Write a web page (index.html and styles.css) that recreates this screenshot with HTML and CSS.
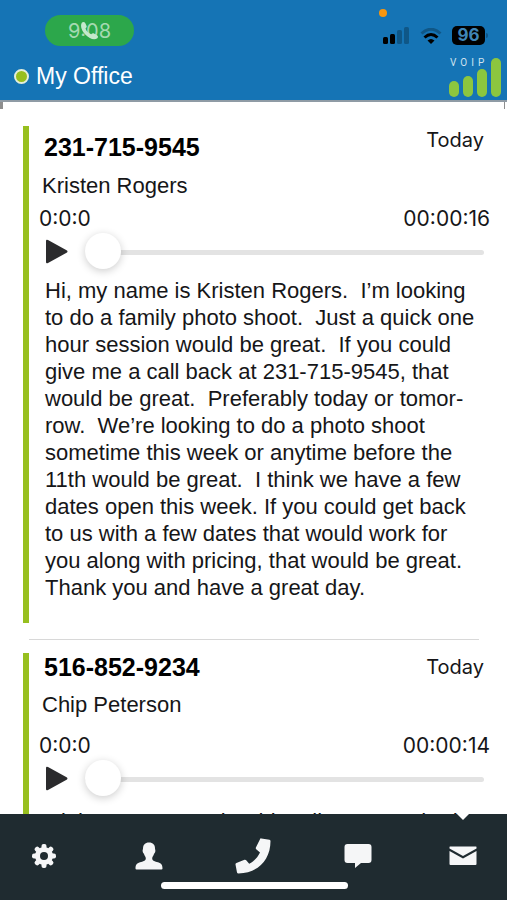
FILE: index.html
```html
<!DOCTYPE html>
<html lang="en">
  <head>
    <meta charset="UTF-8" />
    <meta name="viewport" content="width=device-width, initial-scale=1.0" />
    <title>My Office</title>
    <link rel="stylesheet" href="styles.css">
  </head>
  <body>
    <header class="header">
      <div class="status-bar">
        <div class="call-pill">
          <span>9:08</span>
          <svg class="pill-phone" width="20" height="20" viewBox="0 0 20 20">
            <path d="M3 1.5C4 .6 5.600 .8 6.200 2L7.600 5C8 6 7.400 6.800 6.500 7.600C7.300 10.200 9.600 12.500 12.200 13.300C13 12.400 14 12 15 12.500L18 14.200C19.200 14.900 19.300 16.200 18.300 17.200C12.500 22.300-1.800 8.500 3 1.500Z" />
          </svg>
        </div>
        <div class="status-icons">
          <span class="mic-dot"></span>
          <svg width="27" height="17" viewBox="0 0 27 17">
            <rect x="0" y="10" width="5" height="7" rx="1.500" />
            <rect x="7" y="7" width="5" height="10" rx="1.500" />
            <rect class="faded" x="14" y="3" width="5" height="14" rx="1.500" />
            <rect class="faded" x="21" y="0" width="5" height="17" rx="1.500" />
          </svg>
          <svg width="22" height="16" viewBox="0 0 22 16">
            <path class="wifi-arc faded" d="M1.500 5.500Q11-3 20.500 5.500" />
            <path class="wifi-arc" d="M4.500 9.500Q11 3.500 17.500 9.500" />
            <path d="M7.500 12.500Q11 9.500 14.500 12.500L11 16Z" />
          </svg>
          <span class="battery">96</span>
        </div>
      </div>
      <div class="title-bar">
        <span class="presence"></span>
        <h1 class="title">My Office</h1>
        <div class="voip">
          <span class="voip-label">VOIP</span>
          <svg width="52" height="40" viewBox="0 0 52 40">
            <rect x="0" y="23" width="10" height="16" rx="5" />
            <rect x="14" y="18" width="10" height="21" rx="5" />
            <rect x="28" y="11" width="10" height="28" rx="5" />
            <rect x="42" y="0" width="10" height="39" rx="5" />
          </svg>
        </div>
      </div>
    </header>

    <main class="messages">
      <article class="message">
        <div class="message-top">
          <h2 class="number">231-715-9545</h2>
          <span class="date">Today</span>
        </div>
        <div class="name">Kristen Rogers</div>
        <div class="times">
          <span>0:0:0</span>
          <span>00:00:16</span>
        </div>
        <div class="player">
          <button class="play" aria-label="Play">
            <svg width="22" height="26" viewBox="0 0 22 26">
              <path d="M0 2Q0 0 2 1L21 11.500Q22 12.500 21 13.500L2 24Q0 25 0 23Z" />
            </svg>
          </button>
          <input class="seek" type="range" min="0" max="16" value="0" aria-label="Position" />
        </div>
        <p class="transcript">
          Hi, my name is Kristen Rogers.&nbsp; I’m looking<br />
          to do a family photo shoot.&nbsp; Just a quick one<br />
          hour session would be great.&nbsp; If you could<br />
          give me a call back at 231-715-9545, that<br />
          would be great.&nbsp; Preferably today or tomor-<br />
          row.&nbsp; We’re looking to do a photo shoot<br />
          sometime this week or anytime before the<br />
          11th would be great.&nbsp; I think we have a few<br />
          dates open this week. If you could get back<br />
          to us with a few dates that would work for<br />
          you along with pricing, that would be great.<br />
          Thank you and have a great day.
        </p>
      </article>

      <hr class="divider" />

      <article class="message compact">
        <div class="message-top">
          <h2 class="number">516-852-9234</h2>
          <span class="date">Today</span>
        </div>
        <div class="name">Chip Peterson</div>
        <div class="times">
          <span>0:0:0</span>
          <span>00:00:14</span>
        </div>
        <div class="player">
          <button class="play" aria-label="Play">
            <svg width="22" height="26" viewBox="0 0 22 26">
              <path d="M0 2Q0 0 2 1L21 11.500Q22 12.500 21 13.500L2 24Q0 25 0 23Z" />
            </svg>
          </button>
          <input class="seek" type="range" min="0" max="14" value="0" aria-label="Position" />
        </div>
        <p class="transcript">Hi, hey, my name is Chip, all my news had</p>
      </article>
    </main>

    <nav class="tabs">
      <a class="tab" href="#settings" aria-label="Settings">
        <svg width="24" height="24" viewBox="0 0 24 24">
          <g>
            <rect x="9.500" y="0" width="5" height="24" rx="2" />
            <rect x="9.500" y="0" width="5" height="24" rx="2" transform="rotate(45 12 12)" />
            <rect x="9.500" y="0" width="5" height="24" rx="2" transform="rotate(90 12 12)" />
            <rect x="9.500" y="0" width="5" height="24" rx="2" transform="rotate(135 12 12)" />
            <circle cx="12" cy="12" r="9" />
          </g>
          <circle class="hole" cx="12" cy="12" r="4" />
        </svg>
      </a>
      <a class="tab" href="#contacts" aria-label="Contacts">
        <svg width="28" height="28" viewBox="0 0 28 28">
          <path d="M14 .5C18 .5 20 3 20 6.500C20 7.500 20.600 8 20.300 9.500C20 11 19.300 11 19 12C18.500 14 17.200 14.500 17.200 16.500C17.200 19 20 19.300 23 20.300C26.500 21.500 27.500 23 27.500 26.500Q27.500 27.500 26.500 27.500H1.500Q.5 27.500 .5 26.500C.5 23 1.500 21.500 5 20.300C8 19.300 10.800 19 10.800 16.500C10.800 14.500 9.500 14 9 12C8.700 11 8 11 7.700 9.500C7.400 8 8 7.500 8 6.500C8 3 10 .5 14 .5Z" />
        </svg>
      </a>
      <a class="tab" href="#dialer" aria-label="Dialer">
        <svg width="36" height="36" viewBox="0 0 36 36">
          <path d="M25 1.200Q25.300 .2 26.300 .4L34.500 1.800Q35.500 2 35.500 3C35.500 22 23 35 3.500 35.500Q2.300 35.500 2 34.500L.5 26.500Q.4 25.500 1.400 25L9.500 21.800Q10.500 21.500 11.200 22.300L14.200 25.800C19 23.500 22.500 19.500 25 14.500L21.200 11.200Q20.500 10.500 20.900 9.500Z" />
        </svg>
      </a>
      <a class="tab" href="#chat" aria-label="Chat">
        <svg width="28" height="24" viewBox="0 0 28 24">
          <path d="M3.500 0H24.500Q27.500 0 27.500 3V16Q27.500 19 24.500 19H17L11 24V19H3.500Q.5 19 .5 16V3Q.5 0 3.500 0Z" />
        </svg>
      </a>
      <a class="tab active" href="#voicemail" aria-label="Voicemail">
        <svg width="28" height="20" viewBox="0 0 28 20">
          <path d="M.5 1Q.5 .5 1 .5H27Q27.500 .5 27.500 1V2.500L14 10L.5 2.500Z" />
          <path d="M.5 5L14 12.500L27.500 5V18Q27.500 19 26.500 19H1.500Q.5 19 .5 18Z" />
        </svg>
      </a>
      <span class="home-bar"></span>
    </nav>
  </body>
</html>
```

FILE: styles.css
```css
* {
  box-sizing: border-box;
  margin: 0;
  padding: 0;
}
body {
  display: flex;
  flex-direction: column;
  height: 100vh;
  overflow: hidden;
  background-color: #fff;
  color: #161618;
  font-family: "Liberation Sans", Arial, Helvetica, sans-serif;
  font-size: 22px;
}
.header {
  flex: none;
  background-color: #1574b5;
  border-bottom: 2px solid #8f9ba5;
}
.status-bar {
  display: flex;
  justify-content: space-between;
  align-items: center;
  padding: 15px 18px 0 45px;
}
.call-pill {
  display: flex;
  position: relative;
  justify-content: center;
  align-items: center;
  width: 89px;
  height: 31px;
  border-radius: 16px;
  background-color: #2ca74b;
  color: #a5dab2;
  font-family: Inter, sans-serif;
  font-size: 20px;
}
.pill-phone {
  position: absolute;
  left: 34px;
  top: 6px;
  fill: #c5e8cd;
}
.status-icons {
  display: flex;
  position: relative;
  align-items: center;
  gap: 10px;
  padding-top: 10px;
}
.mic-dot {
  position: absolute;
  left: -4px;
  top: -7px;
  width: 8px;
  height: 8px;
  border-radius: 50%;
  background-color: #f7960f;
}
.faded {
  opacity: 0.25;
}
.wifi-arc {
  fill: none;
  stroke: #000;
  stroke-width: 3;
}
.battery {
  position: relative;
  width: 33px;
  height: 19px;
  margin-right: 4px;
  border-radius: 5px;
  background-color: #000;
  color: #3f86b8;
  font-family: Inter, sans-serif;
  font-size: 17px;
  font-weight: 700;
  line-height: 19px;
  text-align: center;
}
.battery::after {
  content: "";
  position: absolute;
  right: -3px;
  top: 7px;
  width: 2px;
  height: 5px;
  border-radius: 0 2px 2px 0;
  background-color: #0f5688;
}
.title-bar {
  display: flex;
  align-items: center;
  height: 54px;
  padding: 6px 6px 0 14px;
}
.presence {
  width: 15px;
  height: 15px;
  margin-right: 7px;
  border: 2px solid #e4eeda;
  border-radius: 50%;
  background-color: #97bf1f;
}
.title {
  color: #fff;
  font-size: 23px;
  font-weight: 400;
}
.voip {
  position: relative;
  height: 40px;
  margin-top: 4px;
  margin-left: auto;
  fill: #8cc63f;
}
.voip-label {
  position: absolute;
  left: 1px;
  top: -1px;
  color: #cfe2ef;
  font-family: Roboto, sans-serif;
  font-size: 10px;
  letter-spacing: 4px;
}
.messages {
  flex: 1;
  position: relative;
  min-height: 0;
  overflow: hidden;
  padding: 24px 17px 0 23px;
}
/* edges of the panel under the header */
.messages::before {
  content: "";
  position: absolute;
  left: 0;
  right: 2px;
  top: 0;
  height: 7px;
  border-left: 3px solid #8e8e8e;
  border-right: 1px solid #8e8e8e;
}
.message {
  border-left: 6px solid #97bf1f;
  padding: 0 0 22px 10px;
}
.message-top {
  display: flex;
  justify-content: space-between;
  padding: 0 6px 0 5px;
}
.number {
  padding-top: 7px;
  color: #000;
  font-size: 25px;
  line-height: 28px;
}
.date {
  font-family: Inter, sans-serif;
  font-size: 20px;
  line-height: 28px;
}
.name {
  padding: 11px 3px 0;
  line-height: 28px;
}
.times {
  display: flex;
  justify-content: space-between;
  padding-top: 5px;
  font-family: Inter, sans-serif;
  font-size: 21px;
  line-height: 28px;
}
.player {
  display: flex;
  align-items: center;
  gap: 17px;
  height: 38px;
  padding: 0 6px 0 7px;
}
.play {
  height: 26px;
  border: none;
  background: none;
  cursor: pointer;
  fill: #2b2b2d;
}
.seek {
  flex: 1;
  min-width: 0;
  height: 36px;
  appearance: none;
  background: none;
}
.seek::-webkit-slider-runnable-track {
  height: 5px;
  border-radius: 3px;
  background-color: #e3e3e3;
}
.seek::-webkit-slider-thumb {
  appearance: none;
  width: 36px;
  height: 36px;
  margin-top: -17px;
  border-radius: 50%;
  background-color: #fff;
  box-shadow: 0 2px 8px rgba(0, 0, 0, 0.2);
}
.transcript {
  padding: 6px 0 0 6px;
  line-height: 27px;
  white-space: nowrap;
}
.compact .number {
  padding-top: 0;
}
.compact .name {
  padding-top: 10px;
}
.compact .times {
  padding-top: 13px;
}
.compact .transcript {
  padding-top: 10px;
}
.divider {
  margin: 16px 11px 13px 6px;
  border: none;
  border-top: 1px solid #d8d8d8;
}
.tabs {
  display: flex;
  flex: none;
  position: relative;
  height: 86px;
  margin: 0 -8px;
  background-color: #1f2b30;
}
.tab {
  display: flex;
  position: relative;
  flex: 1;
  justify-content: center;
  align-items: center;
  height: 84px;
  fill: #f5f6f7;
}
.hole {
  fill: #1f2b30;
}
.active::before {
  content: "";
  position: absolute;
  top: 0;
  border: 6px solid transparent;
  border-top-color: #fff;
  border-bottom: none;
}
.home-bar {
  position: absolute;
  left: 50%;
  bottom: 11px;
  width: 187px;
  height: 7px;
  margin-left: -93px;
  border-radius: 4px;
  background-color: #fff;
}
```
